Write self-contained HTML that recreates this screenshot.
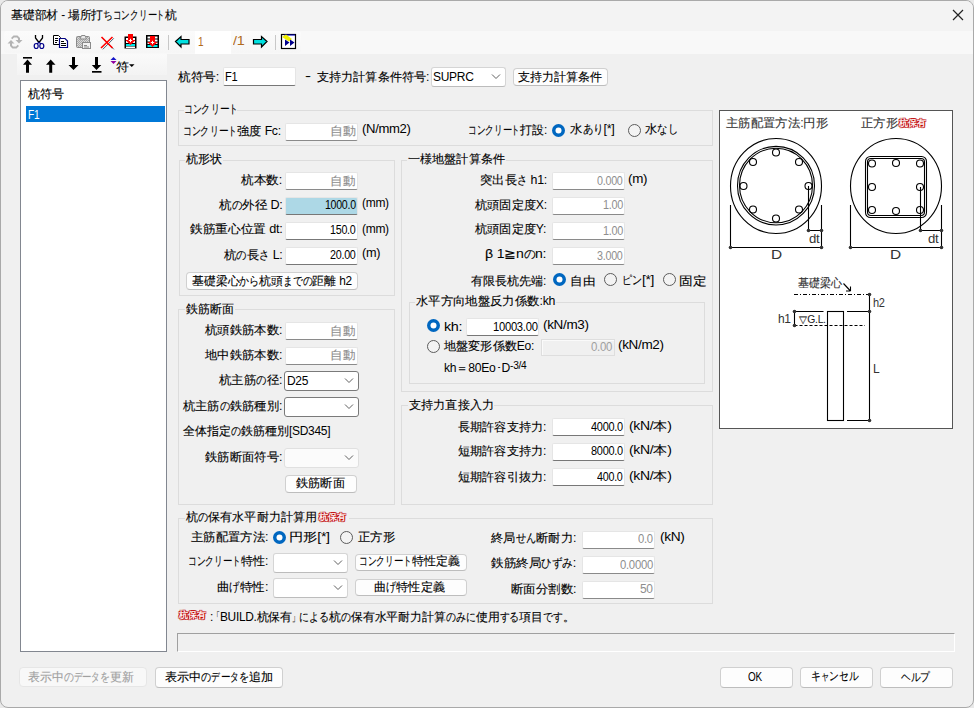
<!DOCTYPE html>
<html><head><meta charset="utf-8">
<style>
html,body{margin:0;padding:0;}
body{width:974px;height:708px;overflow:hidden;position:relative;background:#e9e9e9;font-family:"Liberation Sans",sans-serif;font-size:12px;color:#000;}
#win{position:absolute;left:0;top:0;width:972px;height:706px;border:1px solid #a9a9a9;border-radius:8px;background:#f0f0f0;overflow:hidden;}
.t{position:absolute;white-space:nowrap;font-size:12px;line-height:14px;transform-origin:0 0;-webkit-text-stroke:0.12px currentColor}
.t .k{display:inline-block;transform-origin:0 0;overflow:visible}
.t .a{-webkit-text-stroke:0}
.t sup{font-size:10px;vertical-align:3px;line-height:0}
.inp{position:absolute;border:1px solid #e5e5e5;border-bottom:1px solid #868686;border-radius:2px;}
.cmb{position:absolute;border:1px solid #cfcfcf;border-radius:3px;background:#fff;}
.btn{position:absolute;border:1px solid #d0d0d0;border-bottom-color:#bdbdbd;border-radius:4px;background:#fdfdfd;}
.grp{position:absolute;border:1px solid #dcdcdc;}
svg{overflow:visible}
.badge{position:absolute;font-size:10px;line-height:12px;color:#fff;font-weight:normal;-webkit-text-stroke:0.3px #fff;white-space:nowrap;text-shadow:1px 0px #c00000,-1px 0px #c00000,0px 1px #c00000,0px -1px #c00000,1px 1px #c00000,-1px -1px #c00000,1px -1px #c00000,-1px 1px #c00000;transform:scale(0.9,0.92);transform-origin:0 0}
</style></head><body>
<div id="win"></div>
<!--TITLEBAR-->
<div style="position:absolute;left:1px;top:1px;width:972px;height:30px;background:#f3f3f3;border-radius:7px 7px 0 0"></div>
<div style="position:absolute;left:1px;top:31px;width:972px;height:23px;background:#f8f8f8"></div>
<svg style="position:absolute;left:952px;top:9px" width="12" height="12"><path d="M1 1L11 11M11 1L1 11" stroke="#222" stroke-width="1.2"/></svg>
<!--TOOLBAR1-->
<div style="position:absolute;left:4px;top:31px;width:297px;height:22px;background:linear-gradient(#fbfbfb,#f6f6f6);border-radius:3px"></div>
<div style="position:absolute;left:195px;top:31px;width:36px;height:23px;background:#fff"></div>
<div style="position:absolute;left:168px;top:35px;width:1px;height:15px;background:#c8c8c8"></div>
<div style="position:absolute;left:275px;top:35px;width:1px;height:15px;background:#c8c8c8"></div>
<svg style="position:absolute;left:0;top:0" width="974" height="80">
 <!-- refresh gray -->
 <g fill="#b3b3b3">
  <path d="M11 38 L13.5 35.5 H17.5 L20 38 V40 H22.5 L19 43.5 L15.5 40 H18 V38.7 L17 37.5 H14 L12.3 39.2 Z"/>
  <path d="M19 46 L16.5 48.5 H12.5 L10 46 V43.5 H7.5 L11 40 L14.5 43.5 H12 V45.3 L13 46.5 H16 L17.7 44.8 Z"/>
 </g>
 <!-- scissors -->
 <path d="M35.5 35 V38 L39 42.5 M42.5 35 V38 L39 42.5" fill="none" stroke="#000" stroke-width="1.3"/>
 <ellipse cx="36.2" cy="46" rx="2" ry="2.5" fill="none" stroke="#00008b" stroke-width="1.2"/>
 <ellipse cx="41.8" cy="46" rx="2" ry="2.5" fill="none" stroke="#00008b" stroke-width="1.2"/>
 <path d="M39 42.5 L37 43.8 M39 42.5 L41 43.8" stroke="#00008b" stroke-width="1.2"/>
 <!-- copy -->
 <path d="M53.5 35.5 H58.5 L60.5 37.5 V44.5 H53.5 Z" fill="#fff" stroke="#000" stroke-width="1"/>
 <path d="M55 38.5H58M55 40.5H58M55 42.5H57" stroke="#000" stroke-width="1"/>
 <path d="M59.5 38.5 H65 L67.5 41 V47.5 H59.5 Z" fill="#fff" stroke="#000080" stroke-width="1.2"/>
 <path d="M61 41.5H64M61 43.5H66M61 45.5H66" stroke="#000" stroke-width="1"/>
 <!-- paste gray -->
 <defs><pattern id="chk" width="2" height="2" patternUnits="userSpaceOnUse"><rect width="2" height="2" fill="#d8d8d8"/><rect width="1" height="1" fill="#a8a8a8"/><rect x="1" y="1" width="1" height="1" fill="#a8a8a8"/></pattern></defs>
 <rect x="76.5" y="36.5" width="13" height="11" rx="1" fill="url(#chk)" stroke="#8a8a8a"/>
 <path d="M80 39 L81.5 35.5 H85 L86.5 39 Z" fill="#e8e8e8" stroke="#8a8a8a"/>
 <rect x="82.5" y="42.5" width="8" height="6" fill="#f2f2f2" stroke="#8a8a8a"/>
 <path d="M84 45.5H87M84 47H89" stroke="#8a8a8a"/>
 <!-- red X -->
 <path d="M102 37.5 L113 48.5 M113 37.5 L102 48.5" stroke="#467" stroke-width="1" transform="translate(0.8,0.8)"/>
 <path d="M101.5 37 L112.5 48 M112.5 37 L101 48" stroke="#f00" stroke-width="1.6"/>
 <!-- insert icon A -->
 <rect x="124.5" y="36.5" width="12" height="12" fill="#000"/>
 <rect x="126" y="38" width="9" height="2" fill="#fff"/>
 <rect x="126" y="41" width="9" height="2" fill="#fff"/>
 <rect x="126" y="44" width="9" height="2" fill="#00e8e8"/>
 <rect x="126" y="46.5" width="9" height="1.5" fill="#fff"/>
 <path d="M128 34 H133 V40 H135.5 L130.5 45 L125.5 40 H128 Z" fill="#f00"/>
 <path d="M130.5 38.8V42.2M128.8 40.5H132.2" stroke="#fff" stroke-width="1"/>
 <!-- insert icon B -->
 <rect x="146" y="35" width="13" height="13" fill="#000"/>
 <rect x="147.5" y="36.5" width="10" height="2" fill="#fff"/>
 <rect x="147.5" y="39.5" width="10" height="2" fill="#fff"/>
 <rect x="147.5" y="42.5" width="10" height="1.5" fill="#fff"/>
 <rect x="147.5" y="45" width="10" height="2" fill="#00e8e8"/>
 <path d="M150 36 H155 V42 H157.5 L152.5 47 L147.5 42 H150 Z" fill="#f00"/>
 <path d="M152.5 40.8V44.2M150.8 42.5H154.2" stroke="#fff" stroke-width="1"/>
 <!-- left arrow -->
 <path d="M175.5 41.5 L181 36.5 V39.5 H189 V44 H181 V47 Z" fill="#00e0e0" stroke="#000" stroke-width="1.2" stroke-linejoin="miter"/>
 <!-- right arrow -->
 <path d="M267 41.5 L261.5 36.5 V39.5 H253.5 V44 H261.5 V47 Z" fill="#00e0e0" stroke="#000" stroke-width="1.2"/>
 <!-- last icon -->
 <rect x="281.5" y="34.5" width="14" height="14" fill="#fff" stroke="#000" stroke-width="1.2"/>
 <path d="M284 35 H295" stroke="#0000c0" stroke-width="1"/>
 <path d="M282 37 L286 34.5 L292 39 L289 41.5 Z" fill="#f0f000"/>
 <path d="M285 39.5 L289.5 42.5 L285 46 Z M290 39.5 L294.5 42.5 L290 46 Z" fill="#00008b"/>
</svg>

<!--TOOLBAR2-->
<div style="position:absolute;left:17px;top:54px;width:150px;height:21px;background:linear-gradient(#fafafa,#f3f3f3)"></div>
<svg style="position:absolute;left:0;top:0" width="974" height="80">
 <g fill="#000">
  <rect x="23" y="57" width="9" height="1.6"/>
  <path d="M27.5 59.6 L32 64.7 H29 V72.7 H26 V64.7 H23 Z"/>
  <path d="M50.7 59.6 L55.5 64.7 H52.2 V72.7 H49.2 V64.7 H46 Z"/>
  <path d="M73.5 70 L78.5 65 H75 V57 H72 V65 H68.5 Z"/>
  <path d="M96.5 70 L101.3 65 H98 V57 H95 V65 H91.8 Z"/>
  <rect x="92" y="71" width="9.5" height="1.7"/>
  <path d="M129 64.3 H134.5 L131.75 67 Z"/>
 </g>
 <path d="M113.5 57 L116.5 60 H110.5 Z" fill="#1515c8"/>
 <path d="M113.5 64 L116.5 61 H110.5 Z" fill="#9000a0"/>
</svg>

<!--LIST-->
<div style="position:absolute;left:20px;top:80px;width:145px;height:570px;background:#fff;border:1px solid #828790"></div>
<div style="position:absolute;left:26px;top:106px;width:139px;height:16px;background:#0078d7"></div>
<!--STATUS-->
<div style="position:absolute;left:177px;top:633px;width:778px;height:19px;border-top:1px solid #a0a0a0;border-left:1px solid #a0a0a0;border-right:1px solid #fff;border-bottom:1px solid #fff;box-sizing:border-box"></div>
<div style="position:absolute;left:719px;top:110px;width:232px;height:317px;border:1px solid #555;background:#fff"></div>
<svg style="position:absolute;left:0;top:0" width="974" height="708">
<g fill="none" stroke="#000" stroke-width="1.1">
 <!-- circle 1 -->
 <ellipse cx="776" cy="186" rx="45.5" ry="47.5"/>
 <ellipse cx="776" cy="185.7" rx="38.5" ry="39.3"/>
 <ellipse cx="776" cy="185.5" rx="36.5" ry="37.2"/>
 <circle cx="776" cy="152.5" r="3.5"/><circle cx="776" cy="218.5" r="3.5"/>
 <circle cx="743.5" cy="186" r="3.5"/><circle cx="808.5" cy="186" r="3.5"/>
 <circle cx="753" cy="162" r="3.5"/><circle cx="799" cy="162" r="3.5"/>
 <circle cx="753" cy="209.5" r="3.5"/><circle cx="799" cy="209.5" r="3.5"/>
 <path d="M730.5 205V247.5H821.5V205M808.5 186V230.5H821.5"/>
 <!-- circle 2 -->
 <ellipse cx="896" cy="186" rx="45.5" ry="47.5"/>
 <rect x="865.5" y="156.5" width="61" height="61" rx="5"/>
 <rect x="867.5" y="158.5" width="57" height="57" rx="3.5"/>
 <circle cx="872" cy="163.5" r="3.5"/><circle cx="896" cy="163" r="3.5"/><circle cx="920" cy="163.5" r="3.5"/>
 <circle cx="872" cy="187" r="3.5"/><circle cx="920" cy="187" r="3.5"/>
 <circle cx="872" cy="210" r="3.5"/><circle cx="896" cy="211" r="3.5"/><circle cx="920" cy="210" r="3.5"/>
 <path d="M850.5 205V247.5H941.5V205M920.5 187V230.5H941.5"/>
 <!-- pile -->
 <path d="M794 294.5H869" stroke-dasharray="4 2 1 2"/>
 <path d="M869.5 294V420.5M847 311.5H869.5M847 420.5H869.5M794.5 311.5V325.5M794.5 311.5H823.5"/>
 <path d="M794.5 325.5H865" stroke-dasharray="3 2"/>
 <rect x="827.5" y="311.5" width="16" height="109"/>
 <path d="M843.5 283.5L850.5 291M850.5 291V286.5M850.5 291H846"/>
</g>
<g fill="#333">
 <circle cx="730.5" cy="247.5" r="1.8"/><circle cx="821.5" cy="247.5" r="1.8"/><circle cx="808.5" cy="230.5" r="1.8"/><circle cx="821.5" cy="230.5" r="1.8"/>
 <circle cx="850.5" cy="247.5" r="1.8"/><circle cx="941.5" cy="247.5" r="1.8"/><circle cx="920.5" cy="230.5" r="1.8"/><circle cx="941.5" cy="230.5" r="1.8"/>
 <circle cx="869.5" cy="294.5" r="1.8"/><circle cx="869.5" cy="311.5" r="1.8"/><circle cx="869.5" cy="420.5" r="1.8"/>
 <circle cx="794.5" cy="311.5" r="1.8"/><circle cx="794.5" cy="325.5" r="1.8"/>
</g>
</svg>

<div class="inp" style="left:223px;top:67px;width:71px;height:17px;background:#fff;border-color:#e5e5e5;border-bottom-color:#777777"></div>
<div class="cmb" style="left:431px;top:67px;width:73px;height:18px;background:#fff;border-color:#d5d5d5;border-bottom-color:#bcbcbc"></div>
<svg style="position:absolute;left:491px;top:73px" width="10" height="7"><path d="M1 1.5 L5 5.5 L9 1.5" fill="none" stroke="#606060" stroke-width="1"/></svg>
<div class="btn" style="left:513px;top:68px;width:93px;height:16px"></div>
<div class="grp" style="left:178px;top:110px;width:533px;height:34px"></div>
<div style="position:absolute;left:184px;top:109px;width:53px;height:4px;background:#f0f0f0"></div>
<div class="inp" style="left:285px;top:123px;width:71px;height:16px;background:#fff;border-color:#e5e5e5;border-bottom-color:#8a8a8a"></div>
<svg style="position:absolute;left:552px;top:124px" width="14" height="14"><circle cx="6.5" cy="6.5" r="6.5" fill="#0067c0"/><circle cx="6.5" cy="6.5" r="3" fill="#fff"/></svg>
<svg style="position:absolute;left:628px;top:124px" width="14" height="14"><circle cx="6.5" cy="6.5" r="6" fill="#f3f3f3" stroke="#5c5c5c" stroke-width="1"/></svg>
<div class="grp" style="left:179px;top:160px;width:214px;height:134px"></div>
<div style="position:absolute;left:185px;top:159px;width:38px;height:4px;background:#f0f0f0"></div>
<div class="inp" style="left:285px;top:172px;width:71px;height:16px;background:#fff;border-color:#e5e5e5;border-bottom-color:#8a8a8a"></div>
<div class="inp" style="left:285px;top:197px;width:71px;height:16px;background:#add8e6;border-color:#e5e5e5;border-bottom-color:#777777"></div>
<div class="inp" style="left:285px;top:222px;width:71px;height:16px;background:#fff;border-color:#e5e5e5;border-bottom-color:#777777"></div>
<div class="inp" style="left:285px;top:247px;width:71px;height:16px;background:#fff;border-color:#e5e5e5;border-bottom-color:#777777"></div>
<div class="btn" style="left:186px;top:272px;width:170px;height:16px"></div>
<div class="grp" style="left:178px;top:309px;width:215px;height:194px"></div>
<div style="position:absolute;left:185px;top:308px;width:50px;height:4px;background:#f0f0f0"></div>
<div class="inp" style="left:285px;top:322px;width:71px;height:16px;background:#fff;border-color:#e5e5e5;border-bottom-color:#8a8a8a"></div>
<div class="inp" style="left:285px;top:347px;width:71px;height:16px;background:#fff;border-color:#e5e5e5;border-bottom-color:#8a8a8a"></div>
<div class="cmb" style="left:284px;top:371px;width:73px;height:18px;background:#fff;border-color:#7a7a7a;border-bottom-color:#7a7a7a"></div>
<svg style="position:absolute;left:344px;top:377px" width="10" height="7"><path d="M1 1.5 L5 5.5 L9 1.5" fill="none" stroke="#606060" stroke-width="1"/></svg>
<div class="cmb" style="left:284px;top:397px;width:73px;height:18px;background:#fff;border-color:#7a7a7a;border-bottom-color:#7a7a7a"></div>
<svg style="position:absolute;left:344px;top:403px" width="10" height="7"><path d="M1 1.5 L5 5.5 L9 1.5" fill="none" stroke="#606060" stroke-width="1"/></svg>
<div class="cmb" style="left:284px;top:448px;width:73px;height:18px;background:#fbfbfb;border-color:#e0e0e0;border-bottom-color:#e0e0e0"></div>
<svg style="position:absolute;left:344px;top:454px" width="10" height="7"><path d="M1 1.5 L5 5.5 L9 1.5" fill="none" stroke="#606060" stroke-width="1"/></svg>
<div class="btn" style="left:285px;top:475px;width:70px;height:16px"></div>
<div class="grp" style="left:401px;top:160px;width:310px;height:230px"></div>
<div style="position:absolute;left:407px;top:159px;width:99px;height:4px;background:#f0f0f0"></div>
<div class="inp" style="left:552px;top:172px;width:71px;height:16px;background:#fff;border-color:#e5e5e5;border-bottom-color:#8a8a8a"></div>
<div class="inp" style="left:552px;top:197px;width:71px;height:16px;background:#fff;border-color:#e5e5e5;border-bottom-color:#8a8a8a"></div>
<div class="inp" style="left:552px;top:222px;width:71px;height:16px;background:#fff;border-color:#e5e5e5;border-bottom-color:#8a8a8a"></div>
<div class="inp" style="left:552px;top:247px;width:71px;height:16px;background:#fff;border-color:#e5e5e5;border-bottom-color:#8a8a8a"></div>
<svg style="position:absolute;left:553px;top:273px" width="14" height="14"><circle cx="6.5" cy="6.5" r="6.5" fill="#0067c0"/><circle cx="6.5" cy="6.5" r="3" fill="#fff"/></svg>
<svg style="position:absolute;left:604px;top:273px" width="14" height="14"><circle cx="6.5" cy="6.5" r="6" fill="#f3f3f3" stroke="#5c5c5c" stroke-width="1"/></svg>
<svg style="position:absolute;left:663px;top:273px" width="14" height="14"><circle cx="6.5" cy="6.5" r="6" fill="#f3f3f3" stroke="#5c5c5c" stroke-width="1"/></svg>
<div class="grp" style="left:409px;top:302px;width:294px;height:80px"></div>
<div style="position:absolute;left:415px;top:301px;width:141px;height:4px;background:#f0f0f0"></div>
<svg style="position:absolute;left:427px;top:319px" width="14" height="14"><circle cx="6.5" cy="6.5" r="6.5" fill="#0067c0"/><circle cx="6.5" cy="6.5" r="3" fill="#fff"/></svg>
<div class="inp" style="left:466px;top:318px;width:71px;height:16px;background:#fff;border-color:#e5e5e5;border-bottom-color:#777777"></div>
<svg style="position:absolute;left:427px;top:340px" width="14" height="14"><circle cx="6.5" cy="6.5" r="6" fill="#f3f3f3" stroke="#5c5c5c" stroke-width="1"/></svg>
<div style="position:absolute;left:541px;top:339px;width:74px;height:17px;background:#f0f0f0;border:1px solid #dedede;box-shadow:inset 1px 1px 0 #fafafa;box-sizing:border-box"></div>
<div class="grp" style="left:401px;top:405px;width:310px;height:98px"></div>
<div style="position:absolute;left:408px;top:404px;width:86px;height:4px;background:#f0f0f0"></div>
<div class="inp" style="left:552px;top:418px;width:71px;height:16px;background:#fff;border-color:#e5e5e5;border-bottom-color:#777777"></div>
<div class="inp" style="left:552px;top:443px;width:71px;height:16px;background:#fff;border-color:#e5e5e5;border-bottom-color:#777777"></div>
<div class="inp" style="left:552px;top:468px;width:71px;height:16px;background:#fff;border-color:#e5e5e5;border-bottom-color:#777777"></div>
<div class="grp" style="left:178px;top:518px;width:533px;height:84px"></div>
<div style="position:absolute;left:185px;top:517px;width:164px;height:4px;background:#f0f0f0"></div>
<svg style="position:absolute;left:273px;top:531px" width="14" height="14"><circle cx="6.5" cy="6.5" r="6.5" fill="#0067c0"/><circle cx="6.5" cy="6.5" r="3" fill="#fff"/></svg>
<svg style="position:absolute;left:340px;top:531px" width="14" height="14"><circle cx="6.5" cy="6.5" r="6" fill="#f3f3f3" stroke="#5c5c5c" stroke-width="1"/></svg>
<div class="cmb" style="left:273px;top:553px;width:73px;height:18px;background:#fff;border-color:#d5d5d5;border-bottom-color:#bcbcbc"></div>
<svg style="position:absolute;left:333px;top:559px" width="10" height="7"><path d="M1 1.5 L5 5.5 L9 1.5" fill="none" stroke="#606060" stroke-width="1"/></svg>
<div class="btn" style="left:355px;top:554px;width:110px;height:15px"></div>
<div class="cmb" style="left:273px;top:578px;width:73px;height:18px;background:#fff;border-color:#d5d5d5;border-bottom-color:#bcbcbc"></div>
<svg style="position:absolute;left:333px;top:584px" width="10" height="7"><path d="M1 1.5 L5 5.5 L9 1.5" fill="none" stroke="#606060" stroke-width="1"/></svg>
<div class="btn" style="left:355px;top:579px;width:110px;height:15px"></div>
<div class="inp" style="left:582px;top:531px;width:71px;height:16px;background:#fff;border-color:#e5e5e5;border-bottom-color:#8a8a8a"></div>
<div class="inp" style="left:582px;top:556px;width:71px;height:16px;background:#fff;border-color:#e5e5e5;border-bottom-color:#8a8a8a"></div>
<div class="inp" style="left:582px;top:581px;width:71px;height:16px;background:#fff;border-color:#e5e5e5;border-bottom-color:#8a8a8a"></div>
<div class="btn" style="left:19px;top:667px;width:126px;height:18px;background:#f8f8f8;border-color:#e6e6e6"></div>
<div class="btn" style="left:155px;top:667px;width:126px;height:19px"></div>
<div class="btn" style="left:720px;top:667px;width:71px;height:19px"></div>
<div class="btn" style="left:800px;top:667px;width:71px;height:19px"></div>
<div class="btn" style="left:880px;top:667px;width:71px;height:19px"></div>
<div class="t" style="left:11.00px;top:8px;font-size:12px;color:#000;transform:scaleX(0.9822)">基礎部材<span class="a" style="letter-spacing:-0.3px"> - </span>場所打<span class="k" style="width:10px;transform:scaleX(0.833)">ち</span><span class="k" style="width:8.7px;transform:scaleX(0.725)">コ</span><span class="k" style="width:8.7px;transform:scaleX(0.725)">ン</span><span class="k" style="width:8.7px;transform:scaleX(0.725)">ク</span><span class="k" style="width:8.7px;transform:scaleX(0.725)">リ</span><span class="k" style="width:9.5px;transform:scaleX(0.792)">ー</span><span class="k" style="width:8.7px;transform:scaleX(0.725)">ト</span>杭</div>
<div class="t" style="left:178.00px;top:70px;font-size:12px;color:#000;transform:scaleX(1.0513)">杭符号<span class="a" style="letter-spacing:-0.3px">:</span></div>
<div class="t" style="left:225.08px;top:70px;font-size:12px;color:#000;transform:scaleX(0.9231)"><span class="a" style="letter-spacing:-0.3px">F1</span></div>
<div class="t" style="left:305.00px;top:69px;font-size:12px;color:#000;transform:scaleX(1.5000)"><span class="a" style="letter-spacing:-0.3px">-</span></div>
<div class="t" style="left:317.00px;top:70px;font-size:12px;color:#000;transform:scaleX(1.0090)">支持力計算条件符号<span class="a" style="letter-spacing:-0.3px">:</span></div>
<div class="t" style="left:433.00px;top:70px;font-size:12px;color:#000;transform:scaleX(1.0000)"><span class="a" style="letter-spacing:-0.3px">SUPRC</span></div>
<div class="t" style="left:518.00px;top:70px;font-size:12px;color:#000;transform:scaleX(1.0000)">支持力計算条件</div>
<div class="t" style="left:183.98px;top:102px;font-size:12px;color:#000;transform:scaleX(1.0200)"><span class="k" style="width:8.7px;transform:scaleX(0.725)">コ</span><span class="k" style="width:8.7px;transform:scaleX(0.725)">ン</span><span class="k" style="width:8.7px;transform:scaleX(0.725)">ク</span><span class="k" style="width:8.7px;transform:scaleX(0.725)">リ</span><span class="k" style="width:9.5px;transform:scaleX(0.792)">ー</span><span class="k" style="width:8.7px;transform:scaleX(0.725)">ト</span></div>
<div class="t" style="left:182.98px;top:124px;font-size:12px;color:#000;transform:scaleX(1.0213)"><span class="k" style="width:8.7px;transform:scaleX(0.725)">コ</span><span class="k" style="width:8.7px;transform:scaleX(0.725)">ン</span><span class="k" style="width:8.7px;transform:scaleX(0.725)">ク</span><span class="k" style="width:8.7px;transform:scaleX(0.725)">リ</span><span class="k" style="width:9.5px;transform:scaleX(0.792)">ー</span><span class="k" style="width:8.7px;transform:scaleX(0.725)">ト</span>強度<span class="a" style="letter-spacing:-0.3px"> Fc:</span></div>
<div class="t" style="left:329.91px;top:124px;font-size:12px;color:#8e8e8e;transform:scaleX(1.0870)">自動</div>
<div class="t" style="left:362.00px;top:122px;font-size:12px;color:#000;transform:scaleX(1.0909)"><span class="a" style="letter-spacing:-0.3px">(N/mm2)</span></div>
<div class="t" style="left:468.01px;top:123px;font-size:12px;color:#000;transform:scaleX(0.9873)"><span class="k" style="width:8.7px;transform:scaleX(0.725)">コ</span><span class="k" style="width:8.7px;transform:scaleX(0.725)">ン</span><span class="k" style="width:8.7px;transform:scaleX(0.725)">ク</span><span class="k" style="width:8.7px;transform:scaleX(0.725)">リ</span><span class="k" style="width:9.5px;transform:scaleX(0.792)">ー</span><span class="k" style="width:8.7px;transform:scaleX(0.725)">ト</span>打設<span class="a" style="letter-spacing:-0.3px">:</span></div>
<div class="t" style="left:570.00px;top:122px;font-size:12px;color:#000;transform:scaleX(1.0476)">水<span class="k" style="width:10px;transform:scaleX(0.833)">あ</span><span class="k" style="width:10px;transform:scaleX(0.833)">り</span><span class="a" style="letter-spacing:-0.3px">[*]</span></div>
<div class="t" style="left:645.00px;top:122px;font-size:12px;color:#000;transform:scaleX(1.0323)">水<span class="k" style="width:10px;transform:scaleX(0.833)">な</span><span class="k" style="width:10px;transform:scaleX(0.833)">し</span></div>
<div class="t" style="left:186.00px;top:152px;font-size:12px;color:#000;transform:scaleX(1.0000)">杭形状</div>
<div class="t" style="left:241.00px;top:173px;font-size:12px;color:#000;transform:scaleX(1.0513)">杭本数<span class="a" style="letter-spacing:-0.3px">:</span></div>
<div class="t" style="left:329.96px;top:174px;font-size:12px;color:#8e8e8e;transform:scaleX(1.0435)">自動</div>
<div class="t" style="left:219.00px;top:198px;font-size:12px;color:#000;transform:scaleX(1.0500)">杭<span class="k" style="width:10px;transform:scaleX(0.833)">の</span>外径<span class="a" style="letter-spacing:-0.3px"> D:</span></div>
<div class="t" style="left:325.12px;top:198px;font-size:12px;color:#000;transform:scaleX(0.8824)"><span class="a" style="letter-spacing:-0.3px">1000.0</span></div>
<div class="t" style="left:362.00px;top:196px;font-size:12px;color:#000;transform:scaleX(1.0000)"><span class="a" style="letter-spacing:-0.3px">(mm)</span></div>
<div class="t" style="left:190.00px;top:222px;font-size:12px;color:#000;transform:scaleX(1.0575)">鉄筋重心位置<span class="a" style="letter-spacing:-0.3px"> dt:</span></div>
<div class="t" style="left:330.11px;top:223px;font-size:12px;color:#000;transform:scaleX(0.8929)"><span class="a" style="letter-spacing:-0.3px">150.0</span></div>
<div class="t" style="left:362.00px;top:222px;font-size:12px;color:#000;transform:scaleX(1.0000)"><span class="a" style="letter-spacing:-0.3px">(mm)</span></div>
<div class="t" style="left:224.00px;top:248px;font-size:12px;color:#000;transform:scaleX(1.0357)">杭<span class="k" style="width:10px;transform:scaleX(0.833)">の</span>長<span class="k" style="width:10px;transform:scaleX(0.833)">さ</span><span class="a" style="letter-spacing:-0.3px"> L:</span></div>
<div class="t" style="left:330.00px;top:248px;font-size:12px;color:#000;transform:scaleX(0.8966)"><span class="a" style="letter-spacing:-0.3px">20.00</span></div>
<div class="t" style="left:362.00px;top:246px;font-size:12px;color:#000;transform:scaleX(1.0588)"><span class="a" style="letter-spacing:-0.3px">(m)</span></div>
<div class="t" style="left:192.00px;top:274px;font-size:12px;color:#000;transform:scaleX(0.9877)">基礎梁心<span class="k" style="width:10px;transform:scaleX(0.833)">か</span><span class="k" style="width:10px;transform:scaleX(0.833)">ら</span>杭頭<span class="k" style="width:10px;transform:scaleX(0.833)">ま</span><span class="k" style="width:10px;transform:scaleX(0.833)">で</span><span class="k" style="width:10px;transform:scaleX(0.833)">の</span>距離<span class="a" style="letter-spacing:-0.3px"> h2</span></div>
<div class="t" style="left:186.00px;top:302px;font-size:12px;color:#000;transform:scaleX(1.0000)">鉄筋断面</div>
<div class="t" style="left:205.00px;top:323px;font-size:12px;color:#000;transform:scaleX(1.0267)">杭頭鉄筋本数<span class="a" style="letter-spacing:-0.3px">:</span></div>
<div class="t" style="left:329.96px;top:324px;font-size:12px;color:#8e8e8e;transform:scaleX(1.0435)">自動</div>
<div class="t" style="left:205.00px;top:348px;font-size:12px;color:#000;transform:scaleX(1.0267)">地中鉄筋本数<span class="a" style="letter-spacing:-0.3px">:</span></div>
<div class="t" style="left:329.96px;top:348px;font-size:12px;color:#8e8e8e;transform:scaleX(1.0435)">自動</div>
<div class="t" style="left:219.00px;top:373px;font-size:12px;color:#000;transform:scaleX(1.0328)">杭主筋<span class="k" style="width:10px;transform:scaleX(0.833)">の</span>径<span class="a" style="letter-spacing:-0.3px">:</span></div>
<div class="t" style="left:287.00px;top:374px;font-size:12px;color:#000;transform:scaleX(1.0000)"><span class="a" style="letter-spacing:-0.3px">D25</span></div>
<div class="t" style="left:183.00px;top:399px;font-size:12px;color:#000;transform:scaleX(1.0206)">杭主筋<span class="k" style="width:10px;transform:scaleX(0.833)">の</span>鉄筋種別<span class="a" style="letter-spacing:-0.3px">:</span></div>
<div class="t" style="left:183.00px;top:424px;font-size:12px;color:#000;transform:scaleX(1.0000)">全体指定<span class="k" style="width:10px;transform:scaleX(0.833)">の</span>鉄筋種別<span class="a" style="letter-spacing:-0.3px">[SD345]</span></div>
<div class="t" style="left:205.00px;top:450px;font-size:12px;color:#000;transform:scaleX(1.0267)">鉄筋断面符号<span class="a" style="letter-spacing:-0.3px">:</span></div>
<div class="t" style="left:296.00px;top:476px;font-size:12px;color:#000;transform:scaleX(1.0208)">鉄筋断面</div>
<div class="t" style="left:408.00px;top:152px;font-size:12px;color:#000;transform:scaleX(1.0104)">一様地盤計算条件</div>
<div class="t" style="left:479.97px;top:173px;font-size:12px;color:#000;transform:scaleX(1.0317)">突出長<span class="k" style="width:10px;transform:scaleX(0.833)">さ</span><span class="a" style="letter-spacing:-0.3px"> h1:</span></div>
<div class="t" style="left:597.00px;top:174px;font-size:12px;color:#8e8e8e;transform:scaleX(0.8966)"><span class="a" style="letter-spacing:-0.3px">0.000</span></div>
<div class="t" style="left:628.00px;top:172px;font-size:12px;color:#000;transform:scaleX(1.1176)"><span class="a" style="letter-spacing:-0.3px">(m)</span></div>
<div class="t" style="left:475.00px;top:198px;font-size:12px;color:#000;transform:scaleX(1.0143)">杭頭固定度<span class="a" style="letter-spacing:-0.3px">X:</span></div>
<div class="t" style="left:603.10px;top:198px;font-size:12px;color:#8e8e8e;transform:scaleX(0.9048)"><span class="a" style="letter-spacing:-0.3px">1.00</span></div>
<div class="t" style="left:475.00px;top:222px;font-size:12px;color:#000;transform:scaleX(1.0143)">杭頭固定度<span class="a" style="letter-spacing:-0.3px">Y:</span></div>
<div class="t" style="left:603.10px;top:224px;font-size:12px;color:#8e8e8e;transform:scaleX(0.9048)"><span class="a" style="letter-spacing:-0.3px">1.00</span></div>
<div class="t" style="left:485.00px;top:247px;font-size:12px;color:#000;transform:scaleX(1.1731)">β<span class="a" style="letter-spacing:-0.3px"> 1</span>≧<span class="a" style="letter-spacing:-0.3px">n</span><span class="k" style="width:10px;transform:scaleX(0.833)">の</span><span class="a" style="letter-spacing:-0.3px">n:</span></div>
<div class="t" style="left:597.00px;top:249px;font-size:12px;color:#8e8e8e;transform:scaleX(0.8966)"><span class="a" style="letter-spacing:-0.3px">3.000</span></div>
<div class="t" style="left:471.00px;top:274px;font-size:12px;color:#000;transform:scaleX(1.0000)">有限長杭先端<span class="a" style="letter-spacing:-0.3px">:</span></div>
<div class="t" style="left:569.95px;top:274px;font-size:12px;color:#000;transform:scaleX(1.0455)">自由</div>
<div class="t" style="left:621.85px;top:273px;font-size:12px;color:#000;transform:scaleX(1.1481)"><span class="k" style="width:8.7px;transform:scaleX(0.725)">ピ</span><span class="k" style="width:8.7px;transform:scaleX(0.725)">ン</span><span class="a" style="letter-spacing:-0.3px">[*]</span></div>
<div class="t" style="left:678.86px;top:274px;font-size:12px;color:#000;transform:scaleX(1.1364)">固定</div>
<div class="t" style="left:416.00px;top:294px;font-size:12px;color:#000;transform:scaleX(1.0296)">水平方向地盤反力係数<span class="a" style="letter-spacing:-0.3px">:kh</span></div>
<div class="t" style="left:444.00px;top:320px;font-size:12px;color:#000;transform:scaleX(1.2000)"><span class="a" style="letter-spacing:-0.3px">kh:</span></div>
<div class="t" style="left:493.06px;top:320px;font-size:12px;color:#000;transform:scaleX(0.9362)"><span class="a" style="letter-spacing:-0.3px">10003.00</span></div>
<div class="t" style="left:543.00px;top:318px;font-size:12px;color:#000;transform:scaleX(1.1250)"><span class="a" style="letter-spacing:-0.3px">(kN/m3)</span></div>
<div class="t" style="left:444.00px;top:339px;font-size:12px;color:#000;transform:scaleX(1.0112)">地盤変形係数<span class="a" style="letter-spacing:-0.3px">Eo:</span></div>
<div class="t" style="left:591.00px;top:340px;font-size:12px;color:#a0a0a0;transform:scaleX(0.9545)"><span class="a" style="letter-spacing:-0.3px">0.00</span></div>
<div class="t" style="left:618.00px;top:338px;font-size:12px;color:#000;transform:scaleX(1.1250)"><span class="a" style="letter-spacing:-0.3px">(kN/m2)</span></div>
<div class="t" style="left:444.00px;top:361px;font-size:12px;color:#000;transform:scaleX(1.0122)"><span class="a" style="letter-spacing:-0.3px">kh</span>＝<span class="a" style="letter-spacing:-0.3px">80Eo</span>･<span class="a" style="letter-spacing:-0.3px">D</span><sup><span class="a" style="letter-spacing:-0.3px">-3/4</span></sup></div>
<div class="t" style="left:409.00px;top:398px;font-size:12px;color:#000;transform:scaleX(1.0120)">支持力直接入力</div>
<div class="t" style="left:458.00px;top:420px;font-size:12px;color:#000;transform:scaleX(1.0115)">長期許容支持力<span class="a" style="letter-spacing:-0.3px">:</span></div>
<div class="t" style="left:591.00px;top:420px;font-size:12px;color:#000;transform:scaleX(0.9143)"><span class="a" style="letter-spacing:-0.3px">4000.0</span></div>
<div class="t" style="left:629.00px;top:419px;font-size:12px;color:#000;transform:scaleX(1.1667)"><span class="a" style="letter-spacing:-0.3px">(kN/</span>本<span class="a" style="letter-spacing:-0.3px">)</span></div>
<div class="t" style="left:458.00px;top:444px;font-size:12px;color:#000;transform:scaleX(1.0115)">短期許容支持力<span class="a" style="letter-spacing:-0.3px">:</span></div>
<div class="t" style="left:591.00px;top:444px;font-size:12px;color:#000;transform:scaleX(0.9143)"><span class="a" style="letter-spacing:-0.3px">8000.0</span></div>
<div class="t" style="left:629.00px;top:443px;font-size:12px;color:#000;transform:scaleX(1.1667)"><span class="a" style="letter-spacing:-0.3px">(kN/</span>本<span class="a" style="letter-spacing:-0.3px">)</span></div>
<div class="t" style="left:458.00px;top:470px;font-size:12px;color:#000;transform:scaleX(1.0115)">短期許容引抜力<span class="a" style="letter-spacing:-0.3px">:</span></div>
<div class="t" style="left:597.00px;top:470px;font-size:12px;color:#000;transform:scaleX(0.8966)"><span class="a" style="letter-spacing:-0.3px">400.0</span></div>
<div class="t" style="left:629.00px;top:469px;font-size:12px;color:#000;transform:scaleX(1.1667)"><span class="a" style="letter-spacing:-0.3px">(kN/</span>本<span class="a" style="letter-spacing:-0.3px">)</span></div>
<div class="t" style="left:186.00px;top:510px;font-size:12px;color:#000;transform:scaleX(1.0078)">杭<span class="k" style="width:10px;transform:scaleX(0.833)">の</span>保有水平耐力計算用</div>
<div class="t" style="left:191.00px;top:530px;font-size:12px;color:#000;transform:scaleX(1.0267)">主筋配置方法<span class="a" style="letter-spacing:-0.3px">:</span></div>
<div class="t" style="left:288.82px;top:530px;font-size:12px;color:#000;transform:scaleX(1.1818)">円形<span class="a" style="letter-spacing:-0.3px">[*]</span></div>
<div class="t" style="left:358.00px;top:530px;font-size:12px;color:#000;transform:scaleX(1.0278)">正方形</div>
<div class="t" style="left:188.00px;top:554px;font-size:12px;color:#000;transform:scaleX(1.0000)"><span class="k" style="width:8.7px;transform:scaleX(0.725)">コ</span><span class="k" style="width:8.7px;transform:scaleX(0.725)">ン</span><span class="k" style="width:8.7px;transform:scaleX(0.725)">ク</span><span class="k" style="width:8.7px;transform:scaleX(0.725)">リ</span><span class="k" style="width:9.5px;transform:scaleX(0.792)">ー</span><span class="k" style="width:8.7px;transform:scaleX(0.725)">ト</span>特性<span class="a" style="letter-spacing:-0.3px">:</span></div>
<div class="t" style="left:359.00px;top:554px;font-size:12px;color:#000;transform:scaleX(1.0000)"><span class="k" style="width:8.7px;transform:scaleX(0.725)">コ</span><span class="k" style="width:8.7px;transform:scaleX(0.725)">ン</span><span class="k" style="width:8.7px;transform:scaleX(0.725)">ク</span><span class="k" style="width:8.7px;transform:scaleX(0.725)">リ</span><span class="k" style="width:9.5px;transform:scaleX(0.792)">ー</span><span class="k" style="width:8.7px;transform:scaleX(0.725)">ト</span>特性定義</div>
<div class="t" style="left:217.00px;top:580px;font-size:12px;color:#000;transform:scaleX(1.0408)">曲<span class="k" style="width:10px;transform:scaleX(0.833)">げ</span>特性<span class="a" style="letter-spacing:-0.3px">:</span></div>
<div class="t" style="left:374.00px;top:580px;font-size:12px;color:#000;transform:scaleX(1.0143)">曲<span class="k" style="width:10px;transform:scaleX(0.833)">げ</span>特性定義</div>
<div class="t" style="left:491.00px;top:531px;font-size:12px;color:#000;transform:scaleX(1.0241)">終局<span class="k" style="width:10px;transform:scaleX(0.833)">せ</span><span class="k" style="width:10px;transform:scaleX(0.833)">ん</span>断耐力<span class="a" style="letter-spacing:-0.3px">:</span></div>
<div class="t" style="left:638.00px;top:532px;font-size:12px;color:#8e8e8e;transform:scaleX(0.9375)"><span class="a" style="letter-spacing:-0.3px">0.0</span></div>
<div class="t" style="left:660.00px;top:530px;font-size:12px;color:#000;transform:scaleX(1.1429)"><span class="a" style="letter-spacing:-0.3px">(kN)</span></div>
<div class="t" style="left:491.00px;top:556px;font-size:12px;color:#000;transform:scaleX(1.0494)">鉄筋終局<span class="k" style="width:10px;transform:scaleX(0.833)">ひ</span><span class="k" style="width:10px;transform:scaleX(0.833)">ず</span><span class="k" style="width:10px;transform:scaleX(0.833)">み</span><span class="a" style="letter-spacing:-0.3px">:</span></div>
<div class="t" style="left:620.00px;top:558px;font-size:12px;color:#8e8e8e;transform:scaleX(0.9429)"><span class="a" style="letter-spacing:-0.3px">0.0000</span></div>
<div class="t" style="left:511.00px;top:582px;font-size:12px;color:#000;transform:scaleX(1.0317)">断面分割数<span class="a" style="letter-spacing:-0.3px">:</span></div>
<div class="t" style="left:640.00px;top:582px;font-size:12px;color:#8e8e8e;transform:scaleX(1.0000)"><span class="a" style="letter-spacing:-0.3px">50</span></div>
<div class="t" style="left:210.01px;top:610px;font-size:12px;color:#000;transform:scaleX(0.9916)"><span class="a" style="letter-spacing:-0.3px">:</span><span class="k" style="width:7px;transform:scaleX(0.583)">「</span><span class="a" style="letter-spacing:-0.3px">BUILD.</span>杭保有<span class="k" style="width:7px;transform:scaleX(0.583)">」</span><span class="k" style="width:10px;transform:scaleX(0.833)">に</span><span class="k" style="width:10px;transform:scaleX(0.833)">よ</span><span class="k" style="width:10px;transform:scaleX(0.833)">る</span>杭<span class="k" style="width:10px;transform:scaleX(0.833)">の</span>保有水平耐力計算<span class="k" style="width:10px;transform:scaleX(0.833)">の</span><span class="k" style="width:10px;transform:scaleX(0.833)">み</span><span class="k" style="width:10px;transform:scaleX(0.833)">に</span>使用<span class="k" style="width:10px;transform:scaleX(0.833)">す</span><span class="k" style="width:10px;transform:scaleX(0.833)">る</span>項目<span class="k" style="width:10px;transform:scaleX(0.833)">で</span><span class="k" style="width:10px;transform:scaleX(0.833)">す</span>。</div>
<div class="t" style="left:726.00px;top:116px;font-size:12px;color:#333;transform:scaleX(1.0303)">主筋配置方法<span class="a" style="letter-spacing:-0.3px">:</span>円形</div>
<div class="t" style="left:861.00px;top:116px;font-size:12px;color:#333;transform:scaleX(1.0278)">正方形</div>
<div class="t" style="left:809.00px;top:232px;font-size:12px;color:#333;transform:scaleX(1.1000)"><span class="a" style="letter-spacing:-0.3px">dt</span></div>
<div class="t" style="left:770.71px;top:248px;font-size:12px;color:#333;transform:scaleX(1.2857)"><span class="a" style="letter-spacing:-0.3px">D</span></div>
<div class="t" style="left:928.00px;top:232px;font-size:12px;color:#333;transform:scaleX(1.1000)"><span class="a" style="letter-spacing:-0.3px">dt</span></div>
<div class="t" style="left:889.71px;top:248px;font-size:12px;color:#333;transform:scaleX(1.2857)"><span class="a" style="letter-spacing:-0.3px">D</span></div>
<div class="t" style="left:798.00px;top:276px;font-size:12px;color:#333;transform:scaleX(0.9167)">基礎梁心</div>
<div class="t" style="left:873.08px;top:296px;font-size:12px;color:#333;transform:scaleX(0.9167)"><span class="a" style="letter-spacing:-0.3px">h2</span></div>
<div class="t" style="left:778.00px;top:312px;font-size:12px;color:#333;transform:scaleX(1.0000)"><span class="a" style="letter-spacing:-0.3px">h1</span></div>
<div class="t" style="left:799.00px;top:313px;font-size:10px;color:#222;transform:scaleX(1.0385)">▽<span class="a" style="letter-spacing:-0.3px">G.L.</span></div>
<div class="t" style="left:873.00px;top:362px;font-size:12px;color:#333;transform:scaleX(1.0000)"><span class="a" style="letter-spacing:-0.3px">L</span></div>
<div class="t" style="left:28.00px;top:87px;font-size:12px;color:#000;transform:scaleX(1.0000)">杭符号</div>
<div class="t" style="left:28.15px;top:108px;font-size:12px;color:#fff;transform:scaleX(0.8462)"><span class="a" style="letter-spacing:-0.3px">F1</span></div>
<div class="t" style="left:28.00px;top:670px;font-size:12px;color:#a0a0a0;transform:scaleX(0.9907)">表示中<span class="k" style="width:10px;transform:scaleX(0.833)">の</span><span class="k" style="width:8.7px;transform:scaleX(0.725)">デ</span><span class="k" style="width:9.5px;transform:scaleX(0.792)">ー</span><span class="k" style="width:8.7px;transform:scaleX(0.725)">タ</span><span class="k" style="width:10px;transform:scaleX(0.833)">を</span>更新</div>
<div class="t" style="left:165.00px;top:670px;font-size:12px;color:#000;transform:scaleX(1.0094)">表示中<span class="k" style="width:10px;transform:scaleX(0.833)">の</span><span class="k" style="width:8.7px;transform:scaleX(0.725)">デ</span><span class="k" style="width:9.5px;transform:scaleX(0.792)">ー</span><span class="k" style="width:8.7px;transform:scaleX(0.725)">タ</span><span class="k" style="width:10px;transform:scaleX(0.833)">を</span>追加</div>
<div class="t" style="left:748.00px;top:670px;font-size:12px;color:#000;transform:scaleX(0.8235)"><span class="a" style="letter-spacing:-0.3px">OK</span></div>
<div class="t" style="left:810.88px;top:669px;font-size:12px;color:#000;transform:scaleX(1.1190)"><span class="k" style="width:8.7px;transform:scaleX(0.725)">キ</span><span class="k" style="width:7.5px;transform:scaleX(0.625)">ャ</span><span class="k" style="width:8.7px;transform:scaleX(0.725)">ン</span><span class="k" style="width:8.7px;transform:scaleX(0.725)">セ</span><span class="k" style="width:8.7px;transform:scaleX(0.725)">ル</span></div>
<div class="t" style="left:901.00px;top:670px;font-size:12px;color:#000;transform:scaleX(1.1154)"><span class="k" style="width:8.7px;transform:scaleX(0.725)">ヘ</span><span class="k" style="width:8.7px;transform:scaleX(0.725)">ル</span><span class="k" style="width:8.7px;transform:scaleX(0.725)">プ</span></div>
<div class="t" style="left:116.00px;top:60px;font-size:12px;color:#000;transform:scaleX(1.0833)">符</div>
<div class="t" style="left:198.17px;top:35px;font-size:12px;color:#b06a1c;transform:scaleX(0.8333)"><span class="a" style="letter-spacing:-0.3px">1</span></div>
<div class="t" style="left:233.00px;top:34px;font-size:12px;color:#b06a1c;transform:scaleX(1.2000)"><span class="a" style="letter-spacing:-0.3px">/1</span></div>
<div class="badge" style="left:319px;top:512px">杭保有</div>
<div class="badge" style="left:899px;top:118px">杭保有</div>
<div class="badge" style="left:178.5px;top:610px">杭保有</div>

</body></html>
